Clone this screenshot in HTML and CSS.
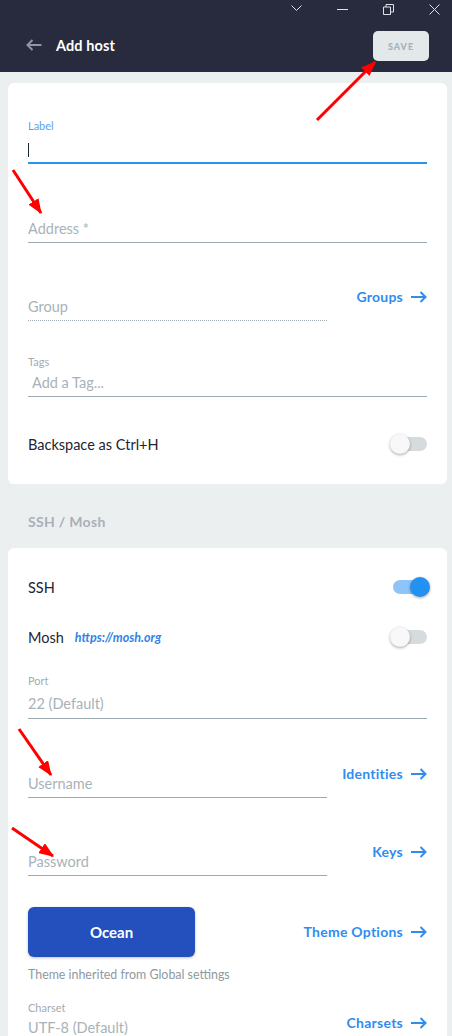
FILE: index.html
```html
<!DOCTYPE html>
<html lang="en">
<head>
<meta charset="utf-8">
<title>Add host</title>
<link rel="stylesheet" href="styles.css">
</head>
<body>
<div class="app">
  <header class="topbar">
    <div class="winctl">
      <svg class="wi wi-chev" viewBox="0 0 11 6"><path d="M0.5 0.5 L5.5 5.5 L10.5 0.5"/></svg>
      <svg class="wi wi-min" viewBox="0 0 11 11"><path d="M0 5.5 H11"/></svg>
      <svg class="wi wi-max" viewBox="0 0 11 11"><path d="M0.5 3 H7.5 V10.5 H0.5 Z M3 3 V0.5 H10.5 V8 H7.5"/></svg>
      <svg class="wi wi-close" viewBox="0 0 11 11"><path d="M0.5 0.5 L10.5 10.5 M10.5 0.5 L0.5 10.5"/></svg>
    </div>
    <div class="titlerow">
      <svg class="back" viewBox="0 0 16 12"><path d="M15.5 6 H1.5 M6.5 1 L1.5 6 L6.5 11"/></svg>
      <h1 class="title">Add host</h1>
      <button class="save">SAVE</button>
    </div>
  </header>

  <main class="content">
    <section class="card card-general">
      <div class="field">
        <div class="flabel flabel-active">Label</div>
        <div class="input input-active"><span class="caret"></span></div>
      </div>

      <div class="field field-address">
        <div class="input">Address *</div>
      </div>

      <div class="link-row row-group">
        <div class="field field-side">
          <div class="input input-dotted">Group</div>
        </div>
        <a class="link">Groups<svg class="arr" viewBox="0 0 16 12"><path d="M0 6 H14.5 M9.5 1 L14.5 6 L9.5 11"/></svg></a>
      </div>

      <div class="field field-tags">
        <div class="flabel">Tags</div>
        <div class="input input-tags">Add a Tag...</div>
      </div>

      <div class="toggle-row row-backspace">
        <span class="row-text">Backspace as Ctrl+H</span>
        <span class="toggle"><span class="track"></span><span class="thumb"></span></span>
      </div>
    </section>

    <h2 class="section-title">SSH / Mosh</h2>

    <section class="card card-ssh">
      <div class="toggle-row">
        <span class="row-text">SSH</span>
        <span class="toggle on"><span class="track"></span><span class="thumb"></span></span>
      </div>

      <div class="toggle-row row-mosh">
        <span class="row-text">Mosh</span>
        <a class="mosh-link">https://mosh.org</a>
        <span class="toggle"><span class="track"></span><span class="thumb"></span></span>
      </div>

      <div class="field field-port">
        <div class="flabel">Port</div>
        <div class="input input-port">22 (Default)</div>
      </div>

      <div class="link-row row-username">
        <div class="field field-side">
          <div class="input">Username</div>
        </div>
        <a class="link">Identities<svg class="arr" viewBox="0 0 16 12"><path d="M0 6 H14.5 M9.5 1 L14.5 6 L9.5 11"/></svg></a>
      </div>

      <div class="link-row row-password">
        <div class="field field-side">
          <div class="input">Password</div>
        </div>
        <a class="link">Keys<svg class="arr" viewBox="0 0 16 12"><path d="M0 6 H14.5 M9.5 1 L14.5 6 L9.5 11"/></svg></a>
      </div>

      <div class="theme-row">
        <button class="theme-btn">Ocean</button>
        <a class="link">Theme Options<svg class="arr" viewBox="0 0 16 12"><path d="M0 6 H14.5 M9.5 1 L14.5 6 L9.5 11"/></svg></a>
      </div>
      <p class="theme-note">Theme inherited from Global settings</p>

      <div class="link-row row-charset">
        <div class="field field-side field-charset">
          <div class="flabel">Charset</div>
          <div class="input input-charset">UTF-8 (Default)</div>
        </div>
        <a class="link link-charset">Charsets<svg class="arr" viewBox="0 0 16 12"><path d="M0 6 H14.5 M9.5 1 L14.5 6 L9.5 11"/></svg></a>
      </div>
    </section>
  </main>

  <svg class="annotations" viewBox="0 0 452 1036">
    <defs>
      <marker id="ah" markerWidth="5" markerHeight="4" refX="4.6" refY="2" orient="auto" markerUnits="strokeWidth">
        <path d="M0 0 L5 2 L0 4 Z" fill="#ff0000"/>
      </marker>
    </defs>
    <line x1="317" y1="120" x2="375" y2="62" marker-end="url(#ah)"/>
    <line x1="13" y1="170" x2="41" y2="213" marker-end="url(#ah)"/>
    <line x1="19" y1="729" x2="51" y2="775" marker-end="url(#ah)"/>
    <line x1="12" y1="828" x2="53" y2="856" marker-end="url(#ah)"/>
  </svg>
</div>
</body>
</html>
```

FILE: styles.css
```css
* { box-sizing: border-box; }

html, body {
  margin: 0;
  padding: 0;
}

body {
  width: 452px;
  height: 1036px;
  overflow: hidden;
  background: #eceff0;
  font-family: Lato, "Noto Sans", "Liberation Sans", sans-serif;
  color: #1d2433;
}

.app {
  position: relative;
  width: 452px;
  height: 1036px;
  overflow: hidden;
}

/* ---------- header ---------- */
.topbar {
  height: 72px;
  background: #282a3e;
}

.winctl {
  height: 18px;
  display: flex;
  align-items: center;
  justify-content: flex-end;
  gap: 35px;
  padding-right: 12px;
}

.wi {
  width: 11px;
  height: 11px;
  fill: none;
  stroke: #dfe2e8;
  stroke-width: 1;
}

.wi-chev {
  height: 6px;
  margin-top: -3px;
}

.titlerow {
  height: 54px;
  display: flex;
  align-items: center;
  padding-left: 26px;
  padding-right: 23px;
}

.back {
  width: 16px;
  height: 12px;
  fill: none;
  stroke: #8f97a5;
  stroke-width: 2;
}

.title {
  margin: 0 0 0 14px;
  font-size: 14.5px;
  font-weight: 700;
  color: #ffffff;
  letter-spacing: 0.1px;
}

.save {
  margin-left: auto;
  width: 56px;
  height: 30px;
  margin-top: 2px;
  border: none;
  border-radius: 5px;
  background: #e3e8eb;
  color: #a7b1b8;
  font-family: Lato, "Liberation Sans", sans-serif;
  font-size: 9px;
  font-weight: 900;
  letter-spacing: 1px;
  padding: 0;
}

/* ---------- content ---------- */
.content {
  padding: 11px 5px 0 8px;
}

.card {
  background: #ffffff;
  border-radius: 6px;
  padding: 0 20px;
}

.card-general {
  padding-top: 36px;
  padding-bottom: 28px;
}

.card-ssh {
  padding-top: 27px;
  padding-bottom: 20px;
}

.flabel {
  font-size: 11px;
  line-height: 14px;
  color: #a3acb3;
}

.flabel-active {
  color: #5c9ff0;
}

.input {
  font-size: 14.5px;
  line-height: 20px;
  color: #a8b2b9;
  padding-bottom: 3px;
  border-bottom: 1px solid #9eaab2;
}

.input-active {
  height: 31px;
  padding: 10px 0 0;
  border-bottom: 2px solid #2694f0;
}

.caret {
  display: block;
  width: 1px;
  height: 14px;
  background: #1d2433;
}

.field-address {
  margin-top: 55px;
}

.link-row {
  display: flex;
  align-items: flex-start;
}

.field-side {
  width: 299px;
  padding-top: 10px;
}

.input-dotted {
  border-bottom: 1px dotted #9eaab2;
}

.row-group {
  margin-top: 44px;
}

.link {
  margin-left: auto;
  display: flex;
  align-items: center;
  gap: 8px;
  font-size: 14px;
  line-height: 20px;
  font-weight: 700;
  letter-spacing: 0.25px;
  color: #2f8cf0;
}

.arr {
  width: 16px;
  height: 12px;
  fill: none;
  stroke: #2f8cf0;
  stroke-width: 2;
}

.field-tags {
  margin-top: 34px;
}

.input-tags {
  margin-top: 4px;
  padding-left: 4px;
}

.toggle-row {
  height: 24px;
  display: flex;
  align-items: center;
}

.row-backspace {
  margin-top: 35px;
}

.row-text {
  font-size: 14.5px;
  color: #1d2433;
}

.toggle {
  position: relative;
  margin-left: auto;
  margin-right: -3px;
  width: 40px;
  height: 20px;
}

.toggle .track {
  position: absolute;
  left: 3px;
  right: 3px;
  top: 3px;
  height: 14px;
  border-radius: 7px;
  background: #d6dbde;
}

.toggle .thumb {
  position: absolute;
  left: 0;
  top: 0;
  width: 20px;
  height: 20px;
  border-radius: 50%;
  background: #f8f8f8;
  box-shadow: 0 1px 3px rgba(0, 0, 0, 0.35);
}

.toggle.on .track {
  background: #8fc4f8;
}

.toggle.on .thumb {
  left: 20px;
  background: #2391f1;
}

/* ---------- section title ---------- */
.section-title {
  margin: 28px 20px 16px;
  font-size: 14px;
  line-height: 20px;
  font-weight: 700;
  color: #a8b1b8;
  letter-spacing: 0.3px;
}

/* ---------- ssh card ---------- */
.row-mosh {
  margin-top: 26px;
}

.mosh-link {
  margin-left: 11px;
  font-size: 12.5px;
  font-style: italic;
  font-weight: 700;
  color: #2f84e8;
}

.field-port {
  margin-top: 25px;
}

.input-port {
  margin-top: 6px;
  padding-bottom: 4px;
}

.row-username {
  margin-top: 45px;
}

.row-password {
  margin-top: 44px;
}

.theme-row {
  margin-top: 31px;
  display: flex;
  align-items: center;
}

.theme-btn {
  width: 167px;
  height: 50px;
  border: none;
  border-radius: 6px;
  background: #2350bd;
  color: #ffffff;
  font-family: Lato, "Liberation Sans", sans-serif;
  font-size: 15px;
  font-weight: 700;
  box-shadow: 0 1px 3px rgba(0, 0, 0, 0.25);
}

.theme-note {
  margin: 10px 0 0;
  font-size: 12.4px;
  line-height: 16px;
  color: #8f989f;
}

.row-charset {
  margin-top: 18px;
}

.field-charset {
  padding-top: 0;
}

.input-charset {
  margin-top: 3px;
}

.link-charset {
  margin-top: 12px;
}

/* ---------- annotation overlay ---------- */
.annotations {
  position: absolute;
  left: 0;
  top: 0;
  width: 452px;
  height: 1036px;
  pointer-events: none;
}

.annotations line {
  stroke: #ff0000;
  stroke-width: 3;
}
```
